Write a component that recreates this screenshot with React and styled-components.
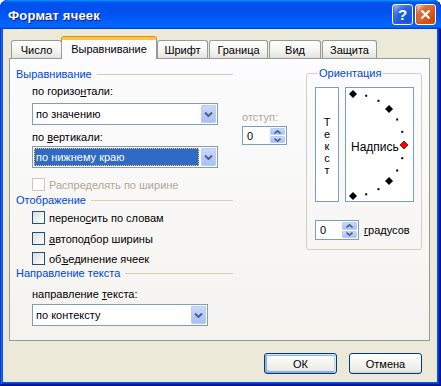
import React from 'react';
import styled, { createGlobalStyle, css } from 'styled-components';

const GlobalStyle = createGlobalStyle`
  html, body { margin: 0; padding: 0; background: #fff; }
  body {
    font-family: "Liberation Sans", Arial, sans-serif;
    font-size: 11px;
    color: #000;
  }
  * { box-sizing: border-box; }
`;

const Window = styled.div`
  width: 441px;
  height: 386px;
  display: flex;
  flex-direction: column;
  background: #0855dd;
  border-radius: 8px 8px 0 0;
  overflow: hidden;
  box-shadow: inset -1px -1px #00138c, inset 1px 1px #0831d9, inset -2px -2px #001ea0,
    inset 2px 2px #166aee, inset -3px -3px #003bda, inset 3px 3px #0855dd;
`;

const TitleBar = styled.div`
  height: 29px;
  flex: none;
  display: flex;
  align-items: center;
  padding: 2px 5px 0 8px;
  background: linear-gradient(180deg, #0997ff, #0053ee 8%, #0050ee 40%, #06f 88%, #06f 93%, #005bff 95%, #003dd7 96%, #003dd7);
  border-radius: 8px 8px 0 0;
`;

const Title = styled.div`
  flex: 1;
  color: #fff;
  font-weight: bold;
  font-size: 13px;
  letter-spacing: 0.2px;
  text-shadow: 1px 1px #0f1089;
`;

const TitleButton = styled.div`
  width: 21px;
  height: 21px;
  margin-left: 2px;
  margin-top: -2px;
  border: 1px solid #fff;
  border-radius: 3px;
  display: flex;
  align-items: center;
  justify-content: center;
  color: #fff;
  font-weight: bold;
  font-size: 15px;
  box-shadow: inset 0 -1px 2px 1px ${p => (p.$close ? '#da4d1c' : '#4646ff')};
  background: ${p =>
    p.$close
      ? 'radial-gradient(circle at 90% 90%, #cc4600 0%, #dc6527 55%, #cd7546 70%, #ffccb2 90%, #fff 100%)'
      : 'radial-gradient(circle at 90% 90%, #0054e9 0%, #2263d5 55%, #4479e4 70%, #a3bbec 90%, #fff 100%)'};
`;

const Client = styled.div`
  flex: 1;
  margin: 0 4px 4px 3px;
  background: #ece9d8;
  padding: 8px 7px 0 6px;
  display: flex;
  flex-direction: column;
`;

const TabRow = styled.div`
  display: flex;
  align-items: flex-end;
  height: 22px;
  padding-left: 2px;
  margin-bottom: -1px;
  position: relative;
  z-index: 1;
`;

const Tab = styled.div`
  width: ${p => p.$w}px;
  height: 18px;
  margin-left: 1px;
  margin-bottom: 1px;
  border: 1px solid #919b9c;
  border-bottom: none;
  border-radius: 3px 3px 0 0;
  background: linear-gradient(180deg, #fff, #f3f3ef 60%, #e3e2dc);
  display: flex;
  align-items: center;
  justify-content: center;
  padding-top: 1px;
  &:first-child { margin-left: 0; }
  ${p =>
    p.$active &&
    css`
      height: 22px;
      margin: 0 -1px 0 -1px;
      background: #fcfcfe;
      border-top: 3px solid #ffc83c;
      box-shadow: 0 -1px 0 #e68b2c;
      padding-top: 0;
      padding-bottom: 2px;
    `}
`;

const Panel = styled.div`
  height: 283px;
  border: 1px solid #919b9c;
  background: linear-gradient(180deg, #fcfcfe, #f4f3ee);
  padding: 8px 0 0 6px;
  display: grid;
  grid-template-columns: 217px 73px 116px;
  align-items: start;
`;

const Column = styled.div`
  display: flex;
  flex-direction: column;
`;

const SectionHeader = styled.div`
  display: flex;
  align-items: center;
  height: 14px;
  margin-top: ${p => p.$mt || 0}px;
  color: #0046d5;
  &::after {
    content: '';
    flex: 1;
    height: 1px;
    margin-left: 5px;
    background: #d0d0bf;
  }
`;

const Label = styled.div`
  height: 13px;
  line-height: 13px;
  margin-top: ${p => p.$mt || 0}px;
  margin-left: ${p => (p.$indent ? 16 : 0)}px;
  color: ${p => (p.$disabled ? '#aca899' : '#000')};
  white-space: nowrap;
`;

const Select = styled.div`
  width: ${p => p.$w}px;
  height: 22px;
  margin-top: ${p => p.$mt || 0}px;
  margin-left: 16px;
  border: 1px solid #7f9db9;
  background: #fff;
  display: flex;
  align-items: center;
  padding: 1px;
`;

const SelectValue = styled.div`
  flex: 1;
  height: 18px;
  margin-right: 2px;
  display: flex;
  align-items: center;
  padding-left: 2px;
  ${p =>
    p.$focused &&
    css`
      background: #316ac5;
      color: #fff;
      outline: 1px dotted #f5c451;
      outline-offset: -1px;
    `}
`;

const ArrowButton = styled.div`
  width: 15px;
  height: 18px;
  border: 1px solid #b9cdf8;
  border-radius: 1px;
  background: linear-gradient(180deg, #c9d8fc, #b5c9f7 60%, #a9bff3);
  display: flex;
  align-items: center;
  justify-content: center;
`;

const Spinner = styled.div`
  width: ${p => p.$w}px;
  height: ${p => p.$h}px;
  margin-top: ${p => p.$mt || 0}px;
  border: 1px solid #7f9db9;
  background: #fff;
  display: flex;
  align-items: center;
  padding: 1px;
`;

const SpinValue = styled.div`
  flex: 1;
  padding-left: 3px;
`;

const SpinButtons = styled.div`
  width: 15px;
  height: 100%;
  display: flex;
  flex-direction: column;
  gap: 1px;
`;

const SpinHalf = styled(ArrowButton)`
  height: auto;
  flex: 1;
`;

const CheckRow = styled.div`
  display: flex;
  align-items: center;
  height: 13px;
  margin-top: ${p => p.$mt || 0}px;
  margin-left: 16px;
  color: ${p => (p.$disabled ? '#aca899' : '#000')};
  white-space: nowrap;
`;

const Box = styled.div`
  width: 13px;
  height: 13px;
  margin-right: 4px;
  border: 1px solid ${p => (p.$disabled ? '#cac8bb' : '#1c5180')};
  background: ${p => (p.$disabled ? '#fff' : 'linear-gradient(135deg, #dcdcd7, #fff)')};
`;

const IndentColumn = styled.div`
  display: flex;
  flex-direction: column;
  padding: 44px 0 0 9px;
`;

const Group = styled.fieldset`
  margin: 0;
  min-width: 0;
  width: 116px;
  height: 183px;
  padding: 7px 0 0 8px;
  border: 1px solid #d0d0bf;
  border-radius: 3px;
`;

const Legend = styled.legend`
  padding: 0 1px;
  margin-left: 3px;
  color: #0046d5;
  line-height: 13px;
`;

const OrientRow = styled.div`
  display: flex;
  gap: 6px;
`;

const VerticalBox = styled.div`
  width: 24px;
  height: 115px;
  border: 1px solid #7f9db9;
  display: flex;
  flex-direction: column;
  align-items: center;
  justify-content: center;
  background: #fff;
  padding-top: 2px;
  span {
    display: block;
    height: 12px;
    line-height: 12px;
    font-size: 11px;
  }
`;

const ArcBox = styled.div`
  position: relative;
  width: 69px;
  height: 115px;
  border: 1px solid #7f9db9;
  background: #fff;
  display: flex;
  align-items: center;
  padding: 4px 0 0 5px;
  font-size: 12px;
  svg {
    position: absolute;
    left: 0;
    top: 0;
  }
`;

const DegreeRow = styled.div`
  display: flex;
  align-items: center;
  margin-top: 18px;
`;

const DegreeLabel = styled.span`
  margin-left: 5px;
`;

const ButtonRow = styled.div`
  display: flex;
  justify-content: flex-end;
  gap: 12px;
  padding-right: 8px;
  margin-top: 12px;
`;

const Button = styled.div`
  width: 73px;
  height: 21px;
  border: 1px solid #003c74;
  border-radius: 3px;
  background: linear-gradient(180deg, #fff, #ecebe5 86%, #d8d0c4);
  display: flex;
  align-items: center;
  justify-content: center;
  ${p =>
    p.$default &&
    css`
      box-shadow: inset -1px 1px #cee7ff, inset 1px 2px #98b8ea, inset -2px 2px #bcd4f6,
        inset 1px -1px #89ade4, inset 2px -2px #89ade4;
    `}
`;

const Chevron = ({ up }) => (
  <svg width="7" height="4" viewBox="0 0 7 4">
    <path
      d={up ? 'M0.5 3.5 L3.5 0.8 L6.5 3.5' : 'M0.5 0.5 L3.5 3.2 L6.5 0.5'}
      fill="none"
      stroke="#4d6185"
      strokeWidth="1.6"
    />
  </svg>
);

const DropArrow = () => (
  <svg width="9" height="5" viewBox="0 0 9 5">
    <path d="M1 0.5 L4.5 4 L8 0.5" fill="none" stroke="#4d6185" strokeWidth="2" />
  </svg>
);

const Dropdown = ({ w, mt, value, focused }) => (
  <Select $w={w} $mt={mt}>
    <SelectValue $focused={focused}>{value}</SelectValue>
    <ArrowButton>
      <DropArrow />
    </ArrowButton>
  </Select>
);

const NumberSpin = ({ w, h, mt }) => (
  <Spinner $w={w} $h={h} $mt={mt}>
    <SpinValue>0</SpinValue>
    <SpinButtons>
      <SpinHalf><Chevron up /></SpinHalf>
      <SpinHalf><Chevron /></SpinHalf>
    </SpinButtons>
  </Spinner>
);

const Checkbox = ({ mt, disabled, children }) => (
  <CheckRow $mt={mt} $disabled={disabled}>
    <Box $disabled={disabled} />
    {children}
  </CheckRow>
);

// marks on the half circle, every 15 degrees
const Arc = () => {
  const marks = [];
  for (let a = -90; a <= 90; a += 15) {
    const r = (a * Math.PI) / 180;
    const x = 7 + 51 * Math.cos(r);
    const y = 57 + 51 * Math.sin(r);
    if (a === 0) {
      marks.push(<path key={a} d={`M${x} ${y - 4} L${x + 4} ${y} L${x} ${y + 4} L${x - 4} ${y} Z`} fill="#ff0000" stroke="#800000" strokeWidth="0.8" />);
    } else if (a % 45 === 0) {
      marks.push(<path key={a} d={`M${x} ${y - 4} L${x + 4} ${y} L${x} ${y + 4} L${x - 4} ${y} Z`} fill="#000" />);
    } else {
      marks.push(<rect key={a} x={x - 1} y={y - 1} width="2" height="2" fill="#000" />);
    }
  }
  return (
    <svg width="67" height="113" viewBox="0 0 67 113">
      {marks}
    </svg>
  );
};

const tabs = [
  ['Число', 51],
  ['Выравнивание', 96],
  ['Шрифт', 51],
  ['Граница', 59],
  ['Вид', 52],
  ['Защита', 55],
];

const App = () => (
  <>
    <GlobalStyle />
    <Window>
      <TitleBar>
        <Title>Формат ячеек</Title>
        <TitleButton>?</TitleButton>
        <TitleButton $close>
          <svg width="11" height="11" viewBox="0 0 11 11">
            <path d="M1.5 1.5 L9.5 9.5 M9.5 1.5 L1.5 9.5" stroke="#fff" strokeWidth="2.2" />
          </svg>
        </TitleButton>
      </TitleBar>
      <Client>
        <TabRow>
          {tabs.map(([name, w], i) => (
            <Tab key={name} $w={w} $active={i === 1}>{name}</Tab>
          ))}
        </TabRow>
        <Panel>
          <Column>
            <SectionHeader>Выравнивание</SectionHeader>
            <Label $indent $mt={4}>по горизо<u>н</u>тали:</Label>
            <Dropdown w={186} mt={5} value="по значению" />
            <Label $indent $mt={6}>по <u>в</u>ертикали:</Label>
            <Dropdown w={186} mt={2} value="по нижнему краю" focused />
            <Checkbox mt={10} disabled>Распределять по ширине</Checkbox>
            <SectionHeader $mt={2}>Отображение</SectionHeader>
            <Checkbox mt={4}>перено<u>с</u>ить по словам</Checkbox>
            <Checkbox mt={8}><u>а</u>втоподбор ширины</Checkbox>
            <Checkbox mt={7}>об<u>ъ</u>единение ячеек</Checkbox>
            <SectionHeader $mt={1}>Направление текста</SectionHeader>
            <Label $indent $mt={8}>направление <u>т</u>екста:</Label>
            <Dropdown w={176} mt={3} value="по контексту" />
          </Column>
          <IndentColumn>
            <Label $disabled>отступ:</Label>
            <NumberSpin w={45} h={19} mt={2} />
          </IndentColumn>
          <Group>
            <Legend>Ориентация</Legend>
            <OrientRow>
              <VerticalBox>
                {['Т', 'е', 'к', 'с', 'т'].map((c, i) => (
                  <span key={i}>{c}</span>
                ))}
              </VerticalBox>
              <ArcBox>
                <Arc />
                Надпись
              </ArcBox>
            </OrientRow>
            <DegreeRow>
              <NumberSpin w={44} h={20} />
              <DegreeLabel><u>г</u>радусов</DegreeLabel>
            </DegreeRow>
          </Group>
        </Panel>
        <ButtonRow>
          <Button $default>ОК</Button>
          <Button>Отмена</Button>
        </ButtonRow>
      </Client>
    </Window>
  </>
);

export default App;
